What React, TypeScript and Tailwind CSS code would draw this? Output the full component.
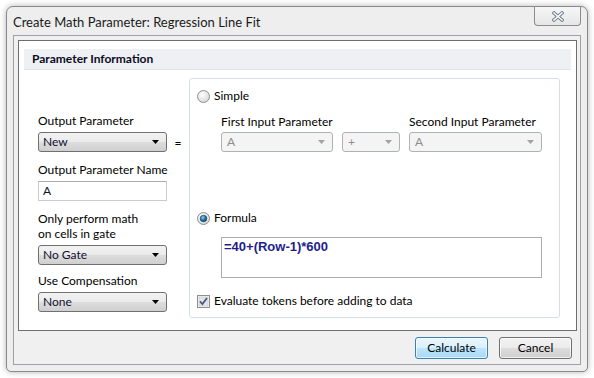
import React from "react";

const ui = "font-['Lato','Open_Sans',sans-serif]";

function Arrow({ disabled }: { disabled?: boolean }) {
  return (
    <svg width="7" height="4" viewBox="0 0 7 4" className="shrink-0">
      <path d="M0 0H7L3.5 4Z" fill={disabled ? "#a2a2a2" : "#000"} />
    </svg>
  );
}

function Combo({ value, className, disabled }: { value: string; className: string; disabled?: boolean }) {
  if (disabled) {
    return (
      <div className={`${className} h-[20px] flex items-center justify-between pl-[5px] pr-[7px] rounded-[3px] border border-[#adb2b5] bg-[#f4f4f4] text-[#8d8d8d] text-[12px]`}>
        <span>{value}</span>
        <Arrow disabled />
      </div>
    );
  }
  return (
    <div className={`${className} h-[20px] flex items-center justify-between pl-[4px] pr-[7px] rounded-[3px] border border-[#707070] bg-[linear-gradient(#f2f2f2_0%,#ebebeb_50%,#dddddd_50%,#cfcfcf_100%)] text-[#101030] text-[12px]`}>
      <span>{value}</span>
      <Arrow />
    </div>
  );
}

function Radio({ checked }: { checked?: boolean }) {
  return (
    <svg width="13" height="13" viewBox="0 0 13 13" className="shrink-0">
      <defs>
        <radialGradient id={checked ? "rgOn" : "rgOff"} cx="0.4" cy="0.35" r="0.7">
          <stop offset="0" stopColor="#ffffff" />
          <stop offset="1" stopColor="#d6d6d6" />
        </radialGradient>
        <radialGradient id="dot" cx="0.4" cy="0.35" r="0.7">
          <stop offset="0" stopColor="#8ad0f5" />
          <stop offset="0.6" stopColor="#1c6ea6" />
          <stop offset="1" stopColor="#0b3d66" />
        </radialGradient>
      </defs>
      <circle cx="6.5" cy="6.5" r="6" fill={`url(#${checked ? "rgOn" : "rgOff"})`} stroke="#8e8f8f" />
      {checked && <circle cx="6.5" cy="6.5" r="3.3" fill="url(#dot)" stroke="#1b3c57" strokeWidth="0.6" />}
    </svg>
  );
}

function Check() {
  return (
    <svg width="13" height="13" viewBox="0 0 13 13" className="shrink-0">
      <rect x="0.5" y="0.5" width="12" height="12" fill="#f4f4f4" stroke="#8f8f8f" />
      <rect x="2" y="2" width="9" height="9" fill="#e3e5e8" stroke="#c6c9cc" strokeWidth="0.6" />
      <path d="M3 6.4L5.4 9L10 3" fill="none" stroke="#4a5a7a" strokeWidth="1.8" />
    </svg>
  );
}

export default function App() {
  return (
    <div className={`${ui} w-[594px] h-[378px] bg-white pt-[6px] pl-[6px] text-black`}>
      {/* window frame */}
      <div className="w-[582px] h-[366px] rounded-t-[7px] rounded-b-[5px] border border-[#8a8a8a] bg-[#eeeeee] shadow-[0_0_6px_rgba(0,0,0,0.3)] flex flex-col px-[6px] pb-[6px]">
        <div className="h-[28px] flex items-start justify-between">
          <span className="mt-[7px] text-[13px] leading-[16px] text-[#1a1a1a]">Create Math Parameter: Regression Line Fit</span>
          <div className="w-[47px] h-[19px] flex items-center justify-center rounded-b-[4px] border border-t-0 border-[#8c8c8c] bg-[linear-gradient(#f7f7f7,#e6e6e6)]">
            <svg width="12" height="11" viewBox="0 0 12 11">
              <path d="M2 2L10 9M10 2L2 9" stroke="#6e7787" strokeWidth="3.4" strokeLinecap="square" />
              <path d="M2 2L10 9M10 2L2 9" stroke="#fafafa" strokeWidth="1.6" strokeLinecap="square" />
            </svg>
          </div>
        </div>

        {/* client area */}
        <div className="flex-1 border border-[#9da1a6] bg-[#f0f0f0] flex flex-col pt-[4px] pl-[4px] pr-[3px]">
          <div className="h-[291px] border border-[#6f6f6f] bg-white pt-[8px] px-[5px]">
            <div className="h-[21px] bg-[#eff0f4] border-b border-[#e2e4ea] pl-[8px] flex items-center text-[12px] font-bold text-[#0b0b1e]">
              Parameter Information
            </div>

            <div className="flex">
              {/* left column */}
              <div className="w-[129px] ml-[14px] pt-[44px] flex flex-col text-[12px] whitespace-nowrap">
                <div className="leading-[14px]">Output Parameter</div>
                <Combo value="New" className="w-[129px] mt-[4px]" />
                <div className="leading-[14px] mt-[11px]">Output Parameter Name</div>
                <div className="w-[129px] h-[20px] mt-[4px] border border-[#c8ccd2] border-t-[#abadb3] bg-white pl-[4px] flex items-center text-[12px] text-[#101030]">A</div>
                <div className="leading-[14px] mt-[11px]">Only perform math</div>
                <div className="leading-[14px] mt-[1px]">on cells in gate</div>
                <Combo value="No Gate" className="w-[129px] mt-[4px]" />
                <div className="leading-[14px] mt-[9px]">Use Compensation</div>
                <Combo value="None" className="w-[129px] mt-[4px]" />
              </div>

              <div className="w-[22px] pt-[66px] text-center text-[12px] leading-[14px]">=</div>

              {/* right group box */}
              <div className="w-[371px] h-[240px] mt-[8px] rounded-[3px] border border-[#d5dfe5] pl-[7px] pt-[10px] flex flex-col text-[12px]">
                <div className="h-[14px] flex items-center gap-[4px]">
                  <Radio />
                  <span className="leading-[14px]">Simple</span>
                </div>
                <div className="flex pl-[24px] mt-[12px] gap-[9px]">
                  <div className="flex flex-col w-[112px]">
                    <div className="leading-[14px] whitespace-nowrap">First Input Parameter</div>
                    <Combo value="A" className="w-[112px] mt-[3px]" disabled />
                  </div>
                  <div className="flex flex-col w-[58px]">
                    <div className="leading-[14px]">&nbsp;</div>
                    <Combo value="+" className="w-[58px] mt-[3px]" disabled />
                  </div>
                  <div className="flex flex-col w-[133px]">
                    <div className="leading-[14px] whitespace-nowrap">Second Input Parameter</div>
                    <Combo value="A" className="w-[133px] mt-[3px]" disabled />
                  </div>
                </div>
                <div className="h-[14px] mt-[59px] flex items-center gap-[4px]">
                  <Radio checked />
                  <span className="leading-[14px]">Formula</span>
                </div>
                <div className="ml-[24px] mt-[12px] w-[321px] h-[41px] border border-[#abadb3] bg-white pl-[2px] pt-[1px] font-['Liberation_Sans',Arial,sans-serif] font-bold text-[13px] leading-[16px] text-[#1e1e8c]">
                  =40+(Row-1)*600
                </div>
                <div className="h-[14px] mt-[16px] flex items-center gap-[4px]">
                  <Check />
                  <span className="leading-[14px]">Evaluate tokens before adding to data</span>
                </div>
              </div>
            </div>
          </div>

          {/* buttons */}
          <div className="flex justify-end gap-[11px] mt-[6px] pr-[5px]">
            <div className="w-[73px] h-[22px] rounded-[3px] border border-[#3c7fb1] bg-[linear-gradient(#eaf6fd_0%,#d9f0fc_50%,#bee6fd_50%,#a7d9f5_100%)] shadow-[inset_0_0_0_1px_rgba(255,255,255,0.7)] flex items-center justify-center text-[12px]">
              Calculate
            </div>
            <div className="w-[73px] h-[22px] rounded-[3px] border border-[#707070] bg-[linear-gradient(#f2f2f2_0%,#ebebeb_50%,#dddddd_50%,#cfcfcf_100%)] shadow-[inset_0_0_0_1px_rgba(255,255,255,0.7)] flex items-center justify-center text-[12px]">
              Cancel
            </div>
          </div>
        </div>
      </div>
    </div>
  );
}
